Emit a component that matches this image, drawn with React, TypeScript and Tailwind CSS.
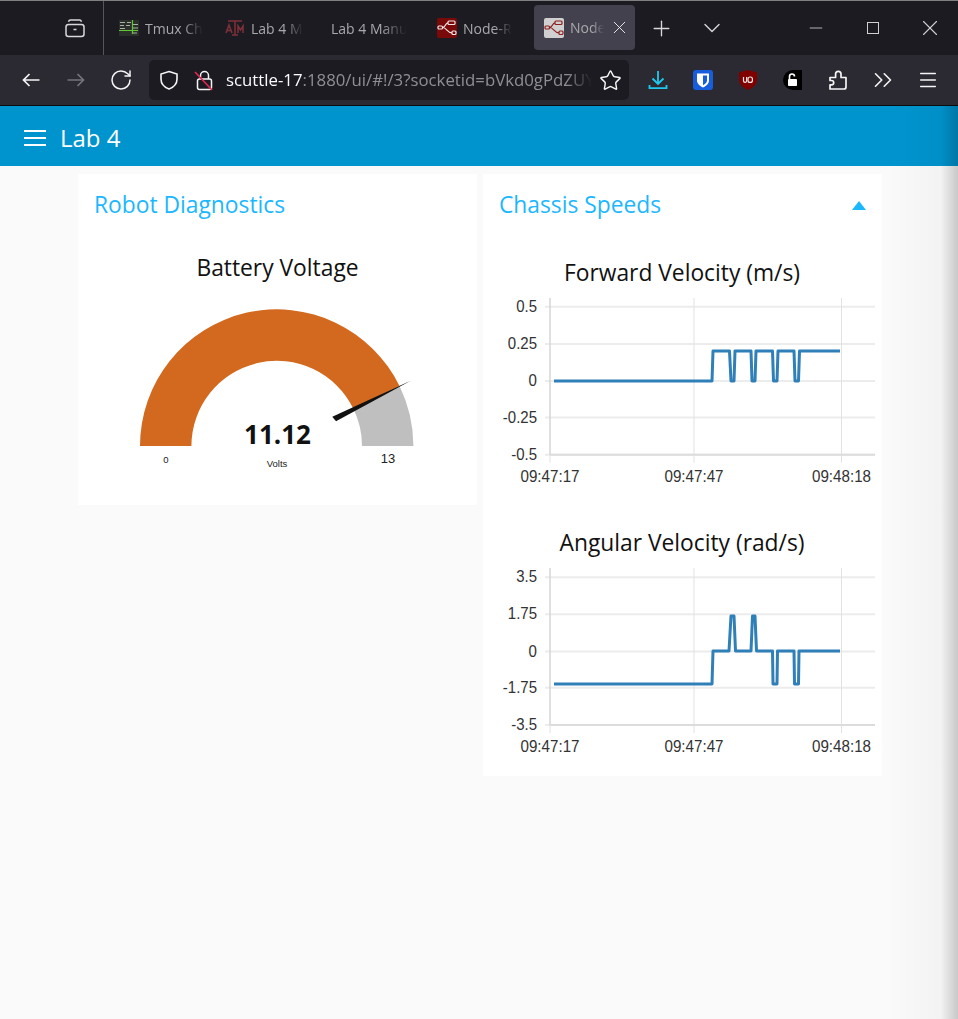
import React from 'react';
import { RotateCw, Star, Plus, ChevronDown, X, Minus, ChevronsRight, Menu } from 'lucide-react';

const TABS = [
  { title: 'Tmux Ch', icon: 'tmux' },
  { title: 'Lab 4 M', icon: 'tamu' },
  { title: 'Lab 4 Manu', icon: 'none' },
  { title: 'Node-R', icon: 'node' },
];

const NodeIcon = ({ active }: { active?: boolean }) => (
  <svg width="20" height="20" viewBox="0 0 20 20" className="shrink-0">
    <rect width="20" height="20" rx="2" fill={active ? '#d0d0d0' : '#7a0a0a'} />
    <g fill="none" stroke={active ? '#8f1d1d' : '#f2e4e4'} strokeWidth="1.2">
      <rect x="11" y="3" width="7" height="3.5" rx="1" />
      <rect x="1" y="8" width="4.5" height="3" rx="1" />
      <rect x="15" y="13" width="4" height="3.5" rx="1" />
      <path d="M5.5 9.5C9 9.5 8 4.8 11 4.8M5.5 9.5C10 9.5 10 14.8 15 14.8" />
    </g>
  </svg>
);

const TabIcon = ({ kind }: { kind: string }) => {
  if (kind === 'tmux')
    return (
      <svg width="20" height="20" viewBox="0 0 20 20" className="shrink-0">
        <rect y="2" width="20" height="16" fill="#2b2f2b" />
        <g stroke="#a8b0a8" strokeWidth="1">
          <path d="M1 4.5H6M8 4.5H12M1 7.5H5M7 7.5H11M1 10.5H6M14 6.5H19M14 10H19M14 15H18" />
        </g>
        <path d="M0 12.5H19M13.5 2V16" stroke="#62c832" strokeWidth="1.2" />
      </svg>
    );
  if (kind === 'tamu')
    return (
      <svg width="20" height="20" viewBox="0 0 20 20" fill="none" stroke="#7d3038" strokeWidth="1.6" className="shrink-0">
        <path d="M3 3H17M10 3V17M7 17H13" />
        <path d="M1 15L4 7L7 15M2 12.5H6" />
        <path d="M13 15V8L15.5 12L18 8V15" />
      </svg>
    );
  if (kind === 'node') return <NodeIcon />;
  return null;
};

const ToolSlot = ({ children }: { children: React.ReactNode }) => (
  <div className="w-[45px] flex items-center justify-center shrink-0">{children}</div>
);

const TabBar = () => (
  <div className="h-[55px] bg-[#1c1b22] border-t border-[#808080] flex text-[14px] font-['Open_Sans',sans-serif] text-[#a9a9ad] shrink-0">
    <div className="w-[104px] h-full border-r border-[#55555c] flex items-center justify-end pr-[18px] shrink-0">
      <svg width="20" height="20" viewBox="0 0 20 20" fill="none" stroke="#d8d8da" strokeWidth="1.5">
        <rect x="1" y="6.5" width="18" height="12" rx="2.5" />
        <path d="M3.5 3.8C3.8 2.6 4.5 2 5.5 2H14.5C15.5 2 16.2 2.6 16.5 3.8M8.5 11.5H11.5" />
      </svg>
    </div>
    <div className="w-[2px] shrink-0" />
    {TABS.map((t) => (
      <div key={t.title} className="w-[106px] flex items-center pl-[13px] gap-[6px] shrink-0">
        {t.icon !== 'none' && <TabIcon kind={t.icon} />}
        <span className="whitespace-nowrap [mask-image:linear-gradient(to_right,black_65%,transparent)]">{t.title}</span>
      </div>
    ))}
    <div className="w-[4px] shrink-0" />
    <div className="w-[101px] h-[45px] mt-[4px] rounded-[4px] bg-[#42414d] flex items-center pl-[10px] gap-[6px] shrink-0">
      <NodeIcon active />
      <span className="w-[34px] whitespace-nowrap text-[#a9a9ad] [mask-image:linear-gradient(to_right,black_65%,transparent)]">Node</span>
      <X size={21} color="#e8e8ea" strokeWidth={1.1} className="-ml-[1px]" />
    </div>
    <div className="w-[52px] flex items-center justify-center shrink-0">
      <Plus size={25} color="#d8d8da" strokeWidth={1.3} />
    </div>
    <div className="w-[50px] flex items-center justify-center shrink-0">
      <ChevronDown size={28} color="#d8d8da" strokeWidth={1.2} />
    </div>
    <div className="flex-1" />
    <div className="w-[57px] flex items-center justify-center"><Minus size={20} color="#d0d0d2" strokeWidth={1} /></div>
    <div className="w-[57px] flex items-center justify-center"><span className="w-[12px] h-[12px] border border-[#d0d0d2]" /></div>
    <div className="w-[57px] flex items-center justify-center"><X size={26} color="#d0d0d2" strokeWidth={1} /></div>
  </div>
);

const ArrowIcon = ({ dir, color }: { dir: 'left' | 'right'; color: string }) => (
  <svg width="18" height="14" viewBox="0 0 18 14" fill="none" stroke={color} strokeWidth="1.7" className={dir === 'right' ? '-scale-x-100' : ''}>
    <path d="M17.5 7H1.5M7.5 1L1.5 7L7.5 13" />
  </svg>
);

const ToolBar = () => (
  <div className="h-[51px] bg-[#2b2a33] border-b border-[#0c0c0d] flex items-start pt-[5px] pl-[8px] shrink-0">
    <div className="h-[40px] flex">
      <ToolSlot><ArrowIcon dir="left" color="#f5f5f5" /></ToolSlot>
      <ToolSlot><ArrowIcon dir="right" color="#75747c" /></ToolSlot>
      <ToolSlot><RotateCw size={24} color="#f5f5f5" strokeWidth={1.5} /></ToolSlot>
    </div>
    <div className="ml-[6px] w-[480px] h-[40px] bg-[#1c1b22] rounded-[5px] flex items-center pl-[10px] shrink-0">
      <svg width="20" height="20" viewBox="0 0 20 20" fill="none" stroke="#f5f5f5" strokeWidth="1.6" className="shrink-0">
        <path d="M10 1.5L18 4V9C18 14 14 17.5 10 19C6 17.5 2 14 2 9V4Z" />
      </svg>
      <div className="ml-[15px] w-[20px] shrink-0">
        <svg width="20" height="22" viewBox="0 0 20 22" fill="none">
          <path d="M6.5 10V6.5a4 4 0 0 1 8 0V10" stroke="#f5f5f5" strokeWidth="1.5" />
          <rect x="3.5" y="10" width="14" height="10.5" rx="2" stroke="#f5f5f5" strokeWidth="1.5" />
          <path d="M1 3L18 21" stroke="#e22850" strokeWidth="1.7" />
        </svg>
      </div>
      <div className="ml-[12px] w-[366px] shrink-0 whitespace-nowrap text-[16.8px] font-['Open_Sans',sans-serif] text-[#8f8f94] [mask-image:linear-gradient(to_right,black_93%,transparent)]">
        <span className="text-[#fbfbfe]">scuttle-17</span>:1880/ui/#!/3?socketid=bVkd0gPdZUY
      </div>
      <Star size={23} color="#f5f5f5" strokeWidth={1.5} className="ml-[7px] shrink-0" />
    </div>
    <div className="h-[40px] flex ml-[6px]">
      <ToolSlot>
        <svg width="20" height="20" viewBox="0 0 20 20" fill="none" stroke="#1fc8ee" strokeWidth="1.8">
          <path d="M10 1V13.5M4.5 8.5L10 14L15.5 8.5M1.5 15V18.2H18.5V15" />
        </svg>
      </ToolSlot>
      <ToolSlot>
        <svg width="20" height="20" viewBox="0 0 20 20">
          <rect width="20" height="20" rx="3" fill="#175ddc" />
          <path d="M4 3.5H16V10.5C16 14 13 16 10 17.5C7 16 4 14 4 10.5Z" fill="#fff" />
          <path d="M10 5.5H14V10.5C14 12.5 12 14 10 15.2Z" fill="#175ddc" />
        </svg>
      </ToolSlot>
      <ToolSlot>
        <svg width="18" height="20" viewBox="0 0 18 20">
          <path d="M9 0L18 2.5V10C18 15 13 18 9 20C5 18 0 15 0 10V2.5Z" fill="#800000" />
          <path d="M4.5 7V10.8A1.6 1.6 0 0 0 7.7 10.8V7" fill="none" stroke="#f4e9e9" strokeWidth="1.2" />
          <rect x="9" y="7" width="4.4" height="5.4" rx="2" fill="none" stroke="#f4e9e9" strokeWidth="1.2" />
        </svg>
      </ToolSlot>
      <ToolSlot>
        <svg width="19" height="20" viewBox="0 0 19 20">
          <path d="M10 0H19V20H10A10 10 0 0 1 10 0Z" fill="#000" />
          <rect x="5" y="9" width="9" height="7" rx="0.8" fill="#fff" />
          <path d="M6.5 9V6.5A2.5 2.5 0 0 1 11.5 6.5" fill="none" stroke="#fff" strokeWidth="1.6" />
        </svg>
      </ToolSlot>
      <ToolSlot>
        <svg width="20" height="20" viewBox="0 0 20 20" fill="none" stroke="#f5f5f5" strokeWidth="1.7" strokeLinejoin="round">
          <path d="M2 19H16A2 2 0 0 0 18 17V7.5H13V4A2.7 2.7 0 0 0 7.6 4V7.5H2V10.5H3.5A2.2 2.2 0 0 1 3.5 14.9H2Z" />
        </svg>
      </ToolSlot>
      <ToolSlot><ChevronsRight size={30} color="#f5f5f5" strokeWidth={1.3} /></ToolSlot>
      <ToolSlot><Menu size={22} color="#f5f5f5" strokeWidth={1.6} /></ToolSlot>
    </div>
  </div>
);

const Gauge = () => (
  <svg width="300" height="180" viewBox="0 0 300 180" className="block font-['Open_Sans',sans-serif]">
    <g transform="translate(-127 -297)">
      <path d="M140 446A136.7 136.7 0 0 1 399.5 386L353.3 408.6A85.3 85.3 0 0 0 191.4 446Z" fill="#d2691e" />
      <path d="M399.5 386A136.7 136.7 0 0 1 413.4 446H362A85.3 85.3 0 0 0 353.3 408.6Z" fill="#bfbfbf" />
      <path d="M332.3 416.7L336 421.3L410.7 380.7Z" fill="#111" />
      <text x="277.5" y="444" textAnchor="middle" fontSize="26" fontWeight="700" fill="#111">11.12</text>
      <text x="166" y="463" textAnchor="middle" fontSize="9.5" fill="#222" fontFamily="'Liberation Sans',sans-serif">0</text>
      <text x="277" y="467" textAnchor="middle" fontSize="9.5" fill="#222" fontFamily="'Liberation Sans',sans-serif">Volts</text>
      <text x="388" y="463" textAnchor="middle" fontSize="13" fill="#222" fontFamily="'Liberation Sans',sans-serif">13</text>
    </g>
  </svg>
);

type ChartProps = {
  title: string;
  ticks: string[];
  gridY: number[];
  line: string;
  top: number;
};

const TIME_TICKS = [
  { x: 550, label: '09:47:17' },
  { x: 694, label: '09:47:47' },
  { x: 841.5, label: '09:48:18' },
];

// axis labels in the picture are squeezed horizontally
const tickWidth = (t: string) =>
  t.split('').reduce((w, c) => w + (c === '.' ? 4 : c === '-' ? 5 : 8.4), 0);

// x is page x (viewBox starts at the card's left edge), y relative to chart top
const Chart = ({ title, ticks, gridY, line, top }: ChartProps) => (
  <div className="flex flex-col items-center">
    <div className="text-[22.8px] leading-[30px] text-[#111] font-['Open_Sans',sans-serif] -ml-[1px]">{title}</div>
    <svg width="399" height="195" viewBox="483 0 399 195" className="block mt-[10px]">
      {gridY.map((y) => (
        <line key={y} x1="545" x2="875" y1={y - top} y2={y - top} stroke="#ececec" strokeWidth="2" />
      ))}
      {TIME_TICKS.map((t) => (
        <line key={t.x} x1={t.x} x2={t.x} y1={0} y2={gridY[4] - top + 8} stroke="#e2e2e2" strokeWidth="1" />
      ))}
      <line x1="550" x2="550" y1={0} y2={gridY[4] - top} stroke="#cfcfcf" strokeWidth="1" />
      <line x1="550" x2="875" y1={gridY[4] - top} y2={gridY[4] - top} stroke="#dcdcdc" strokeWidth="2" />
      <path d={line} transform={`translate(0 ${-top})`} fill="none" stroke="#2f7fb8" strokeWidth="3" strokeLinejoin="round" />
      {ticks.map((t, i) => (
        <text key={t} x="537" y={gridY[i] - top + 5} textAnchor="end" fontSize="17" fill="#333" fontFamily="'Liberation Sans',sans-serif" textLength={tickWidth(t)} lengthAdjust="spacingAndGlyphs">
          {t}
        </text>
      ))}
      {TIME_TICKS.map((t) => (
        <text key={t.label} x={t.x} y={gridY[4] - top + 27} textAnchor="middle" fontSize="17" fill="#333" fontFamily="'Liberation Sans',sans-serif" textLength={59} lengthAdjust="spacingAndGlyphs">
          {t.label}
        </text>
      ))}
    </svg>
  </div>
);

const FORWARD_LINE = 'M554 381H712L713 351H729.5L731 381H734L735 351H751L752 381H755L756 351H772.5L773.5 381H777L778 351H794L795 381H798.5L799.5 351H840';
const ANGULAR_LINE = 'M554 684H712L713 651H729L731 616H734L735.5 651H751L752.5 616H755L756.5 651H772.5L773 684H777L777.5 651H794L794.5 684H798.5L799 651H840';

const CardTitle = ({ children }: { children: React.ReactNode }) => (
  <div className="h-[60px] pl-[16px] pt-[3px] flex items-center text-[#1bb7ff] text-[22.8px] font-['Open_Sans',sans-serif]">{children}</div>
);

export default function App() {
  return (
    <div className="relative w-[958px] h-[1019px] overflow-hidden flex flex-col bg-[#fafafa]">
      <TabBar />
      <ToolBar />
      <header className="h-[60px] bg-[#0094ce] flex items-center pl-[24px] pt-[4px] gap-[14px] shrink-0">
        <div className="w-[22px] flex flex-col gap-[4.5px] shrink-0">
          <span className="h-[2.5px] bg-white" />
          <span className="h-[2.5px] bg-white" />
          <span className="h-[2.5px] bg-white" />
        </div>
        <span className="text-white text-[24px] font-['Open_Sans',sans-serif]">Lab 4</span>
      </header>
      <main className="flex items-start pt-[8px] pl-[78px] gap-[6px]">
        <section className="w-[399px] h-[331px] bg-white">
          <CardTitle>Robot Diagnostics</CardTitle>
          <div className="text-center text-[22.8px] leading-[30px] text-[#111] font-['Open_Sans',sans-serif] mt-[19px]">Battery Voltage</div>
          <div className="pl-[49px] mt-[14px]"><Gauge /></div>
        </section>
        <section className="w-[399px] h-[602px] bg-white">
          <div className="relative">
            <CardTitle>Chassis Speeds</CardTitle>
            <svg width="14" height="9" viewBox="0 0 14 9" className="absolute right-[16px] top-[27px]">
              <path d="M7 0L14 9H0Z" fill="#1bb7ff" />
            </svg>
          </div>
          <div className="mt-[24px]">
            <Chart title="Forward Velocity (m/s)" ticks={['0.5', '0.25', '0', '-0.25', '-0.5']} gridY={[306.7, 344, 381, 417.5, 454.7]} line={FORWARD_LINE} top={298} />
          </div>
          <div className="mt-[35px]">
            <Chart title="Angular Velocity (rad/s)" ticks={['3.5', '1.75', '0', '-1.75', '-3.5']} gridY={[577.3, 614.3, 651.5, 687.7, 725]} line={ANGULAR_LINE} top={568} />
          </div>
        </section>
      </main>
      {/* scroll shadow along the right edge of the page */}
      <div className="absolute right-0 top-[106px] bottom-0 w-[70px] bg-gradient-to-r from-transparent via-black/[.03] via-75% to-black/20 pointer-events-none" />
    </div>
  );
}
